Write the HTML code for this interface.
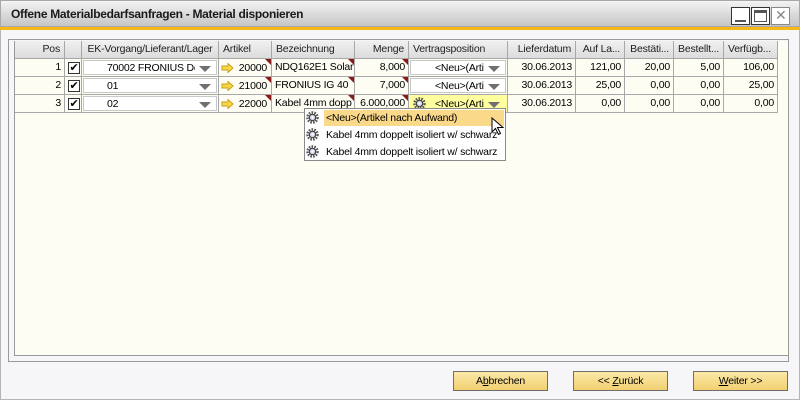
<!DOCTYPE html><html><head><meta charset="utf-8"><style>
*{margin:0;padding:0;box-sizing:border-box}
body{width:800px;height:400px;overflow:hidden;font-family:"Liberation Sans","DejaVu Sans",sans-serif;font-size:10.5px;letter-spacing:-0.2px;color:#000;background:#f6f6f8;position:relative}
.a{position:absolute}
.win{left:0;top:0;width:800px;height:400px;border:1px solid #b4b4b4;border-top:0}
.title{left:0;top:0;width:800px;height:27px;background:linear-gradient(#f4f4f4,#dcdcdc 50%,#c6c6c6);border:1px solid #a8a8a8}
.orange{left:0;top:27px;width:800px;height:3px;background:#f5b719}
.tt{left:11px;top:7px;font-weight:bold;font-size:12px;letter-spacing:-0.3px;color:#1a1a1a}
.wb{top:7px;width:19px;height:18px;border:1px solid #333;background:#fff}
.hd{top:41px;height:18px;background:linear-gradient(#f0f0f0,#dcdcdc);border-right:1px solid #a8a8a8;border-bottom:1px solid #a8a8a8;line-height:16px;padding:0 4px;white-space:nowrap;overflow:hidden;color:#222}
.c{height:18px;border-right:1px solid #a8a8a8;border-bottom:1px solid #a8a8a8;line-height:17px;padding:0 3px;white-space:nowrap;overflow:hidden}
.r{text-align:right}
.cb{background:#fff;border:1px solid #c8c8c8;height:15px}
.arr{width:0;height:0;border-left:6px solid transparent;border-right:6px solid transparent;border-top:6px solid #707070}
.tri{width:0;height:0;border-left:6px solid transparent;border-top:6px solid #8b1a1a}
.btn{top:371px;width:95px;height:20px;border:1px solid #6e6e6e;background:linear-gradient(#fbe9a8,#f2d070);text-align:center;line-height:18px;font-size:10.5px}
.pop{left:304px;top:108px;width:202px;height:53px;background:#fff;border:1px solid #8a8a8a}
</style></head><body>
<div class="a win"></div>
<div class="a title"></div>
<div class="a orange"></div>
<div class="a tt">Offene Materialbedarfsanfragen - Material disponieren</div>
<div class="a wb" style="left:731px"><div class="a" style="left:3px;top:12px;width:11px;height:2px;background:#555"></div></div>
<div class="a wb" style="left:751px"><div class="a" style="left:2px;top:2px;width:13px;height:12px;border:1px solid #555;border-top:3px solid #555"></div></div>
<div class="a wb" style="left:771px;border-color:#888"><div class="a" style="left:3px;top:-1px;font-size:14px;font-weight:bold;color:#888">✕</div></div>

<div class="a" style="left:8px;top:39px;width:781px;height:323px;border:1px solid #999;background:#f6f6f8"></div>
<div class="a" style="left:14px;top:41px;width:774px;height:315px;border-left:1px solid #999;border-bottom:1px solid #999;background:#fdfdf3"></div>

<div id="g"></div>

<div class="a btn" style="left:453px">A<u>b</u>brechen</div>
<div class="a btn" style="left:573px">&lt;&lt; <u>Z</u>urück</div>
<div class="a btn" style="left:693px"><u>W</u>eiter &gt;&gt;</div>

<script>
var X=[15,65,82,219,272,355,409,508,576,625,674,724,778];
var H=['Pos','','EK-Vorgang/Lieferant/Lager','Artikel','Bezeichnung','Menge','Vertragsposition','Lieferdatum','Auf La...','Bestäti...','Bestellt...','Verfügb...'];
var HA=['r','','c','l','l','r','l','r','r','r','r','l'];
var R=[['1','70002 FRONIUS Deu','20000','NDQ162E1 Solar','8,000','30.06.2013','121,00','20,00','5,00','106,00'],
['2','01','21000','FRONIUS IG 40','7,000','30.06.2013','25,00','0,00','0,00','25,00'],
['3','02','22000','Kabel 4mm dopp','6.000,000','30.06.2013','0,00','0,00','0,00','0,00']];
var h='';
function gear(x,y){return '<svg class="a" style="left:'+x+'px;top:'+y+'px" width="15" height="13" viewBox="0 0 15 13"><circle cx="7.5" cy="6.5" r="5" fill="none" stroke="#555" stroke-width="2.5" stroke-dasharray="1.6 1.2"/><circle cx="7.5" cy="6.5" r="3.2" fill="#cfd6e8" stroke="#333" stroke-width="1"/><circle cx="7.5" cy="6.5" r="1.2" fill="#fff"/></svg>';}
for(var i=0;i<12;i++){var w=X[i+1]-X[i];h+='<div class="a hd" style="left:'+X[i]+'px;width:'+w+'px;text-align:'+(HA[i]=='r'?'right':HA[i]=='c'?'center':'left')+';'+(i==2?'padding:0 1px':'')+'">'+H[i]+'</div>';}
for(var r=0;r<3;r++){var y=59+r*18,d=R[r];
 for(var i=0;i<12;i++){var w=X[i+1]-X[i];var bg=(r==2&&i==6)?'#ffffa0':'#fdfdf3';var t='',cl='c';
  if(i==0){t=d[0];cl+=' r';}
  if(i==4){t=d[3];}
  if(i==5){t=d[4];cl+=' r';}
  if(i>=7){t=d[i-2];cl+=' r';}
  h+='<div class="a '+cl+'" style="left:'+X[i]+'px;top:'+y+'px;width:'+w+'px;background:'+bg+'">'+t+'</div>';}
 h+='<div class="a" style="left:68px;top:'+(y+3)+'px;width:12px;height:12px;border:1px solid #333;background:#fff;font-size:11px;line-height:10px;text-align:center;font-weight:bold">✔</div>';
 h+='<div class="a cb" style="left:83px;top:'+(y+1)+'px;width:134px"></div><div class="a" style="left:107px;top:'+(y+3)+'px;width:88px;overflow:hidden;white-space:nowrap">'+d[1]+'</div><div class="a arr" style="left:199px;top:'+(y+7)+'px"></div>';
 h+='<svg class="a" style="left:221px;top:'+(y+4)+'px" width="13" height="10"><path d="M1 3h6V0.5L12 5 7 9.5V7H1z" fill="#f8d840" stroke="#c8a020"/></svg>';
 h+='<div class="a" style="right:'+(800-267)+'px;top:'+(y+3)+'px">'+d[2]+'</div><div class="a tri" style="left:265px;top:'+y+'px"></div><div class="a tri" style="left:348px;top:'+y+'px"></div><div class="a tri" style="left:402px;top:'+y+'px"></div>';
 if(r<2){h+='<div class="a cb" style="left:410px;top:'+(y+1)+'px;width:96px"></div>';}
 else{h+=gear(412,y+2);}
 h+='<div class="a" style="left:435px;top:'+(y+3)+'px;width:52px;overflow:hidden;white-space:nowrap">&lt;Neu&gt;(Arti</div><div class="a arr" style="left:488px;top:'+(y+7)+'px"></div>';
}
h+='<div class="a pop"></div><div class="a" style="left:324px;top:110px;width:180px;height:16px;background:#fbd98a"></div>';
var P=['&lt;Neu&gt;(Artikel nach Aufwand)','Kabel 4mm doppelt isoliert w/ schwarz','Kabel 4mm doppelt isoliert w/ schwarz'];
for(var k=0;k<3;k++){h+=gear(305,111+k*17)+'<div class="a" style="left:326px;top:'+(112+k*17)+'px;width:178px;overflow:hidden;white-space:nowrap">'+P[k]+'</div>';}
h+='<svg class="a" style="left:491px;top:117px" width="14" height="20"><path d="M1 1v14l3.5-3.5 3 6 2-1-3-6H12z" fill="#fff" stroke="#000"/></svg>';
document.getElementById('g').innerHTML=h;
</script>
</body></html>
